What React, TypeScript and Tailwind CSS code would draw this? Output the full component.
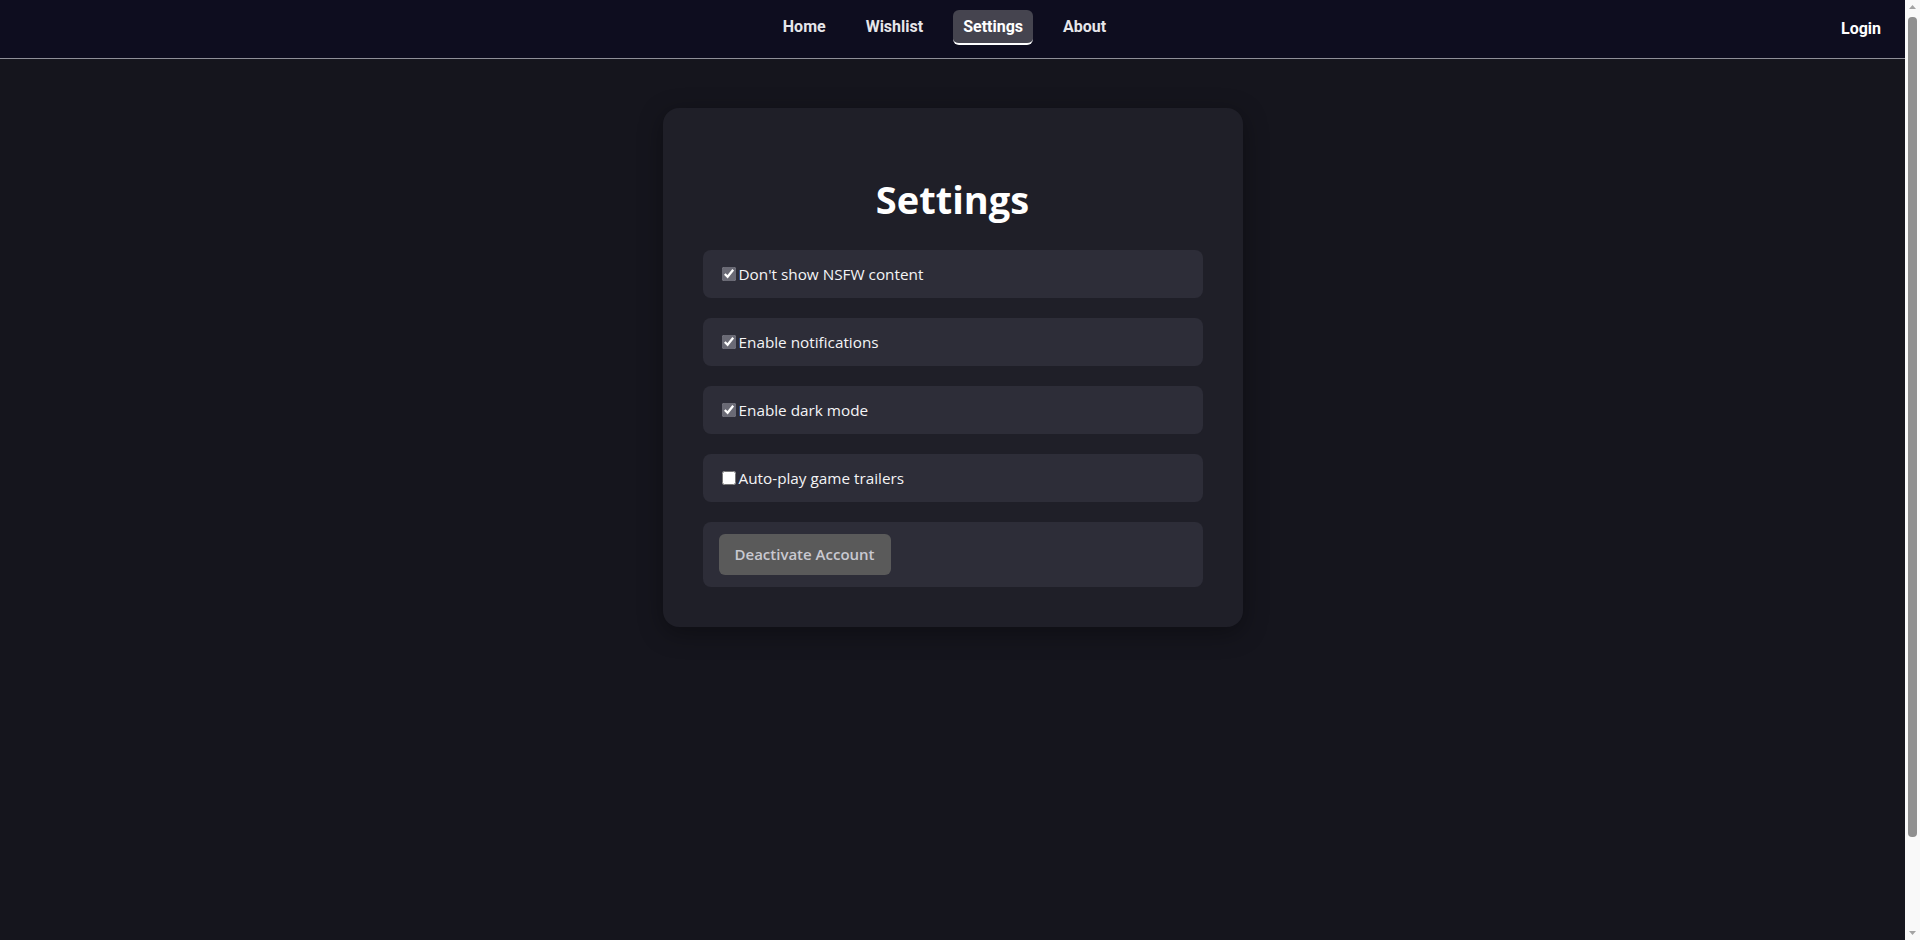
import { useState } from "react";

const navLinks = ["Home", "Wishlist", "Settings", "About"];

interface ToggleRowProps {
  label: string;
  checked: boolean;
  onChange: () => void;
}

function ToggleRow({ label, checked, onChange }: ToggleRowProps) {
  return (
    <label className="flex items-center h-12 px-4 bg-[#2d2d38] rounded-lg text-[15.3px] text-[#f4f4f6] cursor-pointer">
      <input
        type="checkbox"
        checked={checked}
        onChange={onChange}
        className="ml-[3px] mr-[3px] w-[14px] h-[14px] accent-[#6a6a75]"
      />
      {label}
    </label>
  );
}

// the window's scrollbar, as it shows in the screenshot
function ScrollBar() {
  return (
    <div className="fixed top-0 right-0 h-screen w-[15px] bg-[#f9f9f9] flex flex-col items-center">
      <svg width="15" height="15" viewBox="0 0 15 15" className="shrink-0">
        <path d="M4 9 L7.5 5 L11 9 Z" fill="#a3a3a3" />
      </svg>
      <div className="w-[9px] h-[820px] mt-[2px] rounded-[4px] bg-[#8f8f8f]" />
      <div className="flex-1" />
      <svg width="15" height="15" viewBox="0 0 15 15" className="shrink-0">
        <path d="M4 6 L7.5 10 L11 6 Z" fill="#a3a3a3" />
      </svg>
    </div>
  );
}

export default function App() {
  const [prefs, setPrefs] = useState({
    nsfw: true,
    notifications: true,
    dark: true,
    trailers: false,
  });

  const toggle = (key: keyof typeof prefs) =>
    setPrefs((p) => ({ ...p, [key]: !p[key] }));

  return (
    <div className="min-h-screen bg-[#15151d]">
      <div className="mr-[15px] font-['Open_Sans',sans-serif]">
        <nav className="grid grid-cols-[1fr_auto_1fr] items-center h-[59px] bg-[#0e0d1f] border-b border-[#8f8f98] font-['Roboto',sans-serif]">
          <div />
          <ul className="flex items-center gap-5 pr-4 -mt-[3px]">
            {navLinks.map((link) => (
              <li key={link}>
                <a
                  href="#"
                  className={
                    link === "Settings"
                      ? "block px-[10px] h-[35px] leading-[33px] rounded-md bg-[#45444f] border-b-2 border-white text-white font-bold text-base"
                      : "block px-[10px] h-[35px] leading-[33px] text-[#e6e6ea] font-bold text-base"
                  }
                >
                  {link}
                </a>
              </li>
            ))}
          </ul>
          <div className="flex justify-end pr-6">
            <a href="#" className="text-white font-bold text-base">
              Login
            </a>
          </div>
        </nav>

        <main className="min-h-[981px] pt-[49px]">
          <div className="mx-auto w-[580px] p-10 bg-[#1f1f28] rounded-2xl shadow-[0_6px_24px_rgba(0,0,0,0.35)]">
            <h1 className="my-[27px] text-center text-[38px] leading-[48px] font-bold text-white">
              Settings
            </h1>
            <div className="flex flex-col gap-5">
              <ToggleRow
                label="Don't show NSFW content"
                checked={prefs.nsfw}
                onChange={() => toggle("nsfw")}
              />
              <ToggleRow
                label="Enable notifications"
                checked={prefs.notifications}
                onChange={() => toggle("notifications")}
              />
              <ToggleRow
                label="Enable dark mode"
                checked={prefs.dark}
                onChange={() => toggle("dark")}
              />
              <ToggleRow
                label="Auto-play game trailers"
                checked={prefs.trailers}
                onChange={() => toggle("trailers")}
              />
              <div className="px-4 py-3 bg-[#2d2d38] rounded-lg">
                <button className="h-[41px] px-4 rounded-md bg-[#5a5a5a] text-[#c9c9d1] text-[15px] font-semibold">
                  Deactivate Account
                </button>
              </div>
            </div>
          </div>
        </main>
      </div>
      <ScrollBar />
    </div>
  );
}
